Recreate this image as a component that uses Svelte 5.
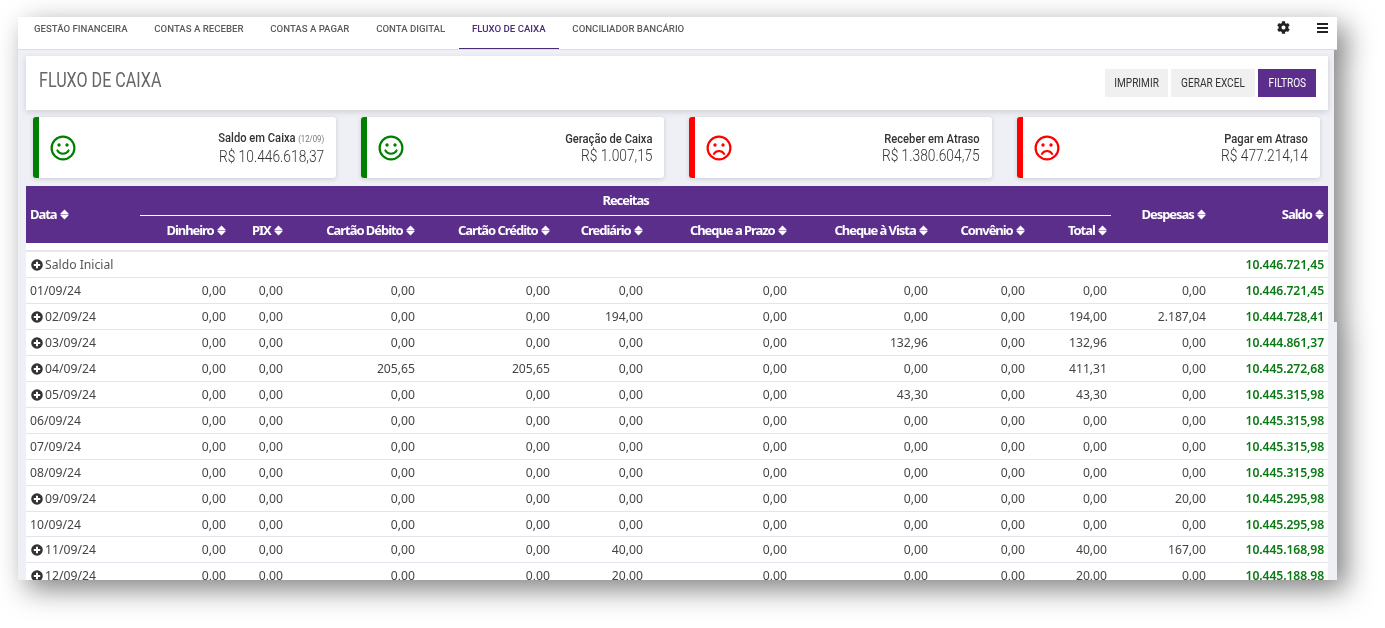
<script>
  const tabs = ['Gestão Financeira', 'Contas a Receber', 'Contas a Pagar', 'Conta Digital', 'Fluxo de Caixa', 'Conciliador Bancário'];

  const cards = [
    { label: 'Saldo em Caixa', note: '(12/09)', value: 'R$ 10.446.618,37', good: true },
    { label: 'Geração de Caixa', value: 'R$ 1.007,15', good: true },
    { label: 'Receber em Atraso', value: 'R$ 1.380.604,75', good: false },
    { label: 'Pagar em Atraso', value: 'R$ 477.214,14', good: false }
  ];

  const receitas = ['Dinheiro', 'PIX', 'Cartão Débito', 'Cartão Crédito', 'Crediário', 'Cheque a Prazo', 'Cheque à Vista', 'Convênio', 'Total'];
  const widths = [114, 90, 57, 132, 135, 93, 144, 141, 97, 82, 99, 118];

  // only the non-zero cells are listed, the rest is 0,00
  function row(date, saldo, expand, values = {}, despesas = '0,00') {
    return {
      date,
      saldo,
      expand,
      despesas,
      cells: receitas.map((name) => values[name] ?? '0,00')
    };
  }

  const rows = [
    row('01/09/24', '10.446.721,45', false),
    row('02/09/24', '10.444.728,41', true, { 'Crediário': '194,00', Total: '194,00' }, '2.187,04'),
    row('03/09/24', '10.444.861,37', true, { 'Cheque à Vista': '132,96', Total: '132,96' }),
    row('04/09/24', '10.445.272,68', true, { 'Cartão Débito': '205,65', 'Cartão Crédito': '205,65', Total: '411,31' }),
    row('05/09/24', '10.445.315,98', true, { 'Cheque à Vista': '43,30', Total: '43,30' }),
    row('06/09/24', '10.445.315,98', false),
    row('07/09/24', '10.445.315,98', false),
    row('08/09/24', '10.445.315,98', false),
    row('09/09/24', '10.445.295,98', true, {}, '20,00'),
    row('10/09/24', '10.445.295,98', false),
    row('11/09/24', '10.445.168,98', true, { 'Crediário': '40,00', Total: '40,00' }, '167,00'),
    row('12/09/24', '10.445.188,98', true, { 'Crediário': '20,00', Total: '20,00' })
  ];
</script>

{#snippet sort()}
  <svg class="sort" viewBox="0 0 10 12" aria-hidden="true">
    <path d="M5 0.4 9.4 4.8a.5.5 0 0 1-.4.9H1a.5.5 0 0 1-.4-.9zM5 11.6.6 7.2a.5.5 0 0 1 .4-.9h8a.5.5 0 0 1 .4.9z" />
  </svg>
{/snippet}

{#snippet plus()}
  <svg class="plus" viewBox="0 0 12 12" aria-hidden="true">
    <path fill-rule="evenodd" d="M6 .2a5.8 5.8 0 1 1 0 11.6A5.8 5.8 0 0 1 6 .2zM5 2.8v2.2H2.8v2H5v2.2h2V7h2.2V5H7V2.8z" />
  </svg>
{/snippet}

{#snippet face(good)}
  <svg class="face" class:good viewBox="0 0 26 26" aria-hidden="true">
    <circle cx="13" cy="13" r="11.4" fill="none" stroke="currentColor" stroke-width="2.2" />
    <circle cx="9" cy="10" r="1.7" fill="currentColor" />
    <circle cx="17" cy="10" r="1.7" fill="currentColor" />
    {#if good}
      <path d="M7.4 15.4c1.2 2.2 3.2 3.3 5.6 3.3s4.4-1.100 5.600-3.300" fill="none" stroke="currentColor" stroke-width="2" stroke-linecap="round" />
    {:else}
      <path d="M7.800 19c1.200-2 3-3 5.200-3s4 1 5.200 3" fill="none" stroke="currentColor" stroke-width="2" stroke-linecap="round" />
    {/if}
  </svg>
{/snippet}

<div class="shot">
  <div class="frame">
    <nav class="tabs">
      {#each tabs as tab, i}
        <span class="tab" class:active={i === 4}>{tab}</span>
      {/each}
      <div class="tools">
        <svg class="gear" viewBox="0 0 512 512" aria-hidden="true">
          <path d="M487 316l-43-25c4-23 4-47 0-70l43-25c5-3 7-9 5-14-11-36-30-68-55-95-4-4-10-5-15-2l-43 25c-18-16-39-28-61-36V24c0-6-4-11-9-12-37-8-75-8-110 0-5 1-9 6-9 12v50c-23 8-43 20-61 36L86 85c-5-3-11-2-15 2-25 27-44 59-55 95-2 5 0 11 5 14l43 25c-4 23-4 47 0 70l-43 25c-5 3-7 9-5 14 11 36 30 68 55 95 4 4 10 5 15 2l43-25c18 16 39 28 61 36v50c0 6 4 11 9 12 37 8 75 8 110 0 5-1 9-6 9-12v-50c23-8 43-20 61-36l43 25c5 3 11 2 15-2 25-27 44-59 55-95 2-5 0-11-5-14zM256 336a80 80 0 1 1 0-160 80 80 0 0 1 0 160z" />
        </svg>
        <div class="bars"><i></i><i></i><i></i></div>
      </div>
    </nav>

    <div class="content">
      <header class="title-bar">
        <h1><span>Fluxo de Caixa</span></h1>
        <div class="actions">
          <button><span>Imprimir</span></button>
          <button><span>Gerar Excel</span></button>
          <button class="primary"><span>Filtros</span></button>
        </div>
      </header>

      <section class="cards">
        {#each cards as card}
          <article class="card" class:bad={!card.good}>
            {@render face(card.good)}
            <div class="card-text">
              <div class="card-label">{card.label}{#if card.note}<small>{card.note}</small>{/if}</div>
              <div class="card-value">{card.value}</div>
            </div>
          </article>
        {/each}
      </section>

      <table>
        <colgroup>
          {#each widths as w}<col style="width: {w}px" />{/each}
        </colgroup>
        <thead>
          <tr class="head-top">
            <th rowspan="2" class="left">Data {@render sort()}</th>
            <th colspan="9" class="group">Receitas</th>
            <th rowspan="2">Despesas {@render sort()}</th>
            <th rowspan="2">Saldo {@render sort()}</th>
          </tr>
          <tr class="head-sub">
            {#each receitas as name}
              <th>{name} {@render sort()}</th>
            {/each}
          </tr>
        </thead>
        <tbody>
          <tr class="spacer"><td colspan="12"></td></tr>
          <tr>
            <td class="left" colspan="10">{@render plus()}<span class="soft">Saldo Inicial</span></td>
            <td></td>
            <td class="saldo">10.446.721,45</td>
          </tr>
          {#each rows as r}
            <tr>
              <td class="left">{#if r.expand}{@render plus()}{/if}{r.date}</td>
              {#each r.cells as cell}<td>{cell}</td>{/each}
              <td>{r.despesas}</td>
              <td class="saldo">{r.saldo}</td>
            </tr>
          {/each}
        </tbody>
      </table>
    </div>
  </div>
</div>

<style>
  :global(body) {
    margin: 0;
    background: #fff;
    overflow: hidden;
  }

  .shot {
    height: 628px;
    padding: 17px 0 0 18px;
    box-sizing: border-box;
    filter: drop-shadow(9px 9px 14px rgba(0, 0, 0, 0.5));
  }

  .frame {
    width: 1319px;
    height: 563px;
    background: #eff0f6;
    overflow: hidden;
    font-family: Roboto, sans-serif;
    clip-path: polygon(0 0, 100% 0, 100% 33px, 1316px 33px, 1316px 305px, 100% 305px, 100% 100%, 0 100%);
  }

  /* top tabs */
  .tabs {
    display: flex;
    height: 33px;
    padding-left: 2.5px;
    box-sizing: border-box;
    background: #fff;
    border-bottom: 1px solid #dcdde3;
  }

  .tab {
    padding: 6px 13.4px 0;
    font-size: 9.65px;
    font-weight: 500;
    line-height: 12px;
    text-transform: uppercase;
    white-space: nowrap;
    color: #5b5b5f;
    box-sizing: border-box;
  }

  .tab.active {
    color: #4b2a78;
    border-bottom: 1px solid #4b2a78;
  }

  .tools {
    display: flex;
    align-items: flex-start;
    gap: 27px;
    margin-left: auto;
    padding: 4px 9px 0 0;
  }

  .gear {
    width: 13px;
    height: 13px;
    fill: #222;
  }

  .bars {
    display: flex;
    flex-direction: column;
    gap: 2px;
    width: 11px;
    padding-top: 2px;
  }

  .bars i {
    height: 2px;
    background: #222;
  }

  .content {
    padding: 6px 9px 0 8px;
  }

  /* title */
  .title-bar {
    display: flex;
    align-items: center;
    justify-content: space-between;
    width: 1302px;
    height: 54px;
    padding: 0 12px 5px 13px;
    box-sizing: border-box;
    background: #fff;
    box-shadow: 0 2px 6px rgba(0, 0, 0, 0.14);
  }

  h1 {
    margin: 0;
    font-size: 20.4px;
    font-weight: 400;
    line-height: 1;
    text-transform: uppercase;
    color: #666;
  }

  h1 span {
    display: inline-block;
    transform: scaleX(0.79);
    transform-origin: left center;
    white-space: nowrap;
  }

  .actions {
    display: flex;
    gap: 3px;
    margin-top: 5px;
  }

  button {
    height: 28px;
    padding: 0;
    border: 0;
    font: 400 12px Roboto, sans-serif;
    text-transform: uppercase;
    background: #f0f0f0;
    color: #333;
  }

  button:nth-child(1) { width: 63px; }
  button:nth-child(2) { width: 84px; }
  button:nth-child(3) { width: 58px; }

  button span {
    display: inline-block;
    transform: scaleX(0.84);
    white-space: nowrap;
  }

  button.primary {
    background: #5b2e8c;
    color: #fff;
  }

  /* indicators */
  .cards {
    display: flex;
    gap: 25px;
    padding: 7px 0 7px 7px;
  }

  .card {
    display: flex;
    align-items: center;
    justify-content: space-between;
    width: 303px;
    height: 61px;
    padding: 0 12px 0 11px;
    box-sizing: border-box;
    background: #fff;
    border-left: 6px solid #008000;
    border-radius: 3px;
    box-shadow: 0 1px 4px rgba(0, 0, 0, 0.16);
  }

  .card.bad {
    border-left-color: #ff0000;
  }

  .face {
    width: 26px;
    height: 26px;
    color: #ff0000;
    margin-top: 1px;
  }

  .face.good {
    color: #008000;
  }

  .card-text {
    text-align: right;
    color: #333;
    transform: scaleX(0.86);
    transform-origin: right center;
    white-space: nowrap;
    margin-top: -1px;
  }

  .card-label {
    font-size: 13px;
    font-weight: 500;
    line-height: 17px;
  }

  .card-label small {
    margin-left: 3px;
    font-size: 9px;
    font-weight: 400;
    color: #777;
  }

  .card-value {
    font-size: 16px;
    font-weight: 300;
    line-height: 17px;
  }

  /* table */
  table {
    width: 1302px;
    table-layout: fixed;
    border-collapse: collapse;
    margin-top: 1px;
    font-family: "Noto Sans", sans-serif;
    font-size: 12.2px;
    color: #444;
    background: #fff;
  }

  th {
    padding: 0 4px;
    text-align: right;
    font-size: 13px;
    font-weight: 700;
    white-space: nowrap;
    color: #fff;
    background: #5b2e8c;
    letter-spacing: -1.05px;
  }

  th.left,
  td.left {
    text-align: left;
  }

  .head-top th {
    height: 28px;
    padding-bottom: 1px;
  }

  .head-sub th {
    height: 27px;
  }

  th.group {
    text-align: center;
    padding-bottom: 2px;
    box-shadow: inset 0 -1px 0 #fff;
  }

  .sort {
    width: 9px;
    height: 11px;
    fill: #fff;
    vertical-align: -1px;
    margin-left: 1px;
  }

  .spacer td {
    height: 7px;
    padding: 0;
    border-bottom: 2px solid #e6e6ee;
  }

  tbody td {
    height: 25px;
    padding: 0 4px;
    text-align: right;
    white-space: nowrap;
    border-bottom: 1px solid #e3e3eb;
  }

  tbody tr:nth-child(12) td {
    height: 24px;
  }

  .soft {
    color: #555;
  }

  .plus {
    width: 12px;
    height: 12px;
    margin: 0 2px 0 1px;
    fill: #333;
    vertical-align: -2px;
  }

  td.saldo {
    font-weight: 600;
    color: #0a7a14;
    letter-spacing: -0.1px;
  }
</style>
